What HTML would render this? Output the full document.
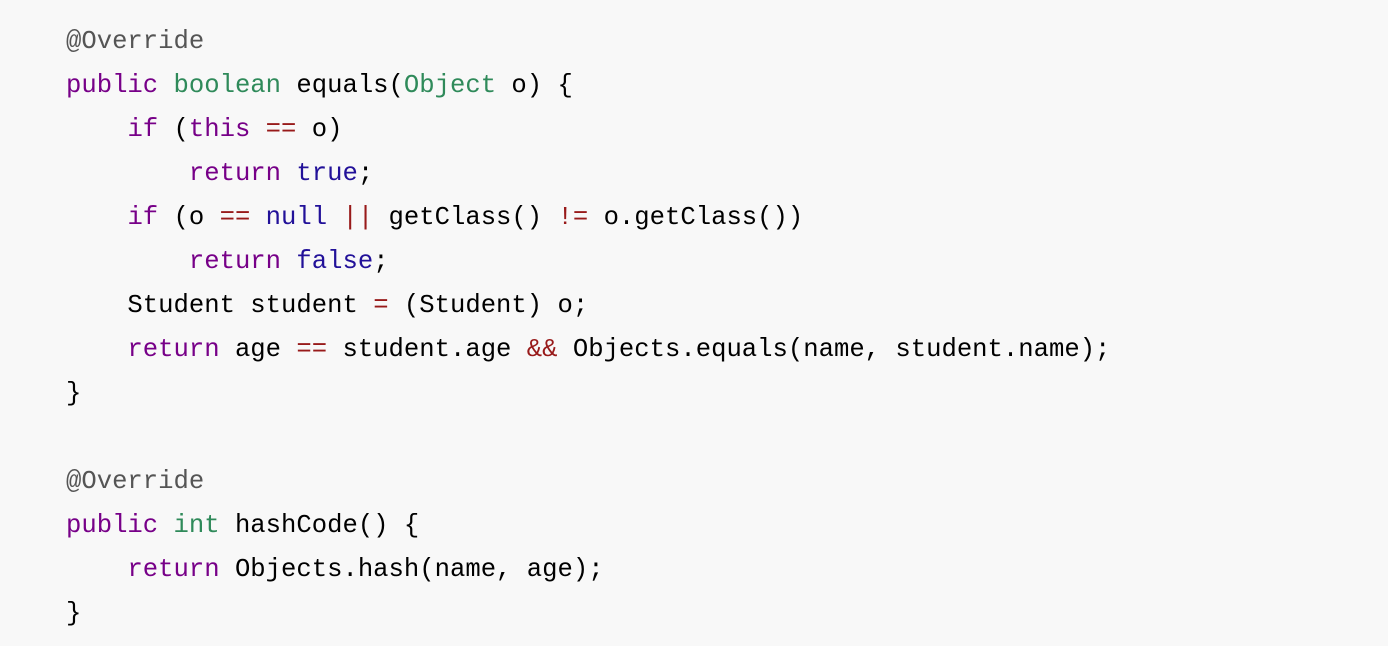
<!DOCTYPE html>
<html><head><meta charset="utf-8"><style>
html,body{margin:0;padding:0;background:#f8f8f8;width:1388px;height:646px;overflow:hidden}
pre{margin:0;padding:20px 0 0 66px;font-family:"Liberation Mono",monospace;font-size:25.6px;line-height:44px;color:#000}
.k{color:#770088}.t{color:#2f8a5a}.a{color:#221199}.o{color:#981a1a}.m{color:#555}
</style></head><body><pre><span class="m">@Override</span>
<span class="k">public</span> <span class="t">boolean</span> equals(<span class="t">Object</span> o) {
    <span class="k">if</span> (<span class="k">this</span> <span class="o">==</span> o)
        <span class="k">return</span> <span class="a">true</span>;
    <span class="k">if</span> (o <span class="o">==</span> <span class="a">null</span> <span class="o">||</span> getClass() <span class="o">!=</span> o.getClass())
        <span class="k">return</span> <span class="a">false</span>;
    Student student <span class="o">=</span> (Student) o;
    <span class="k">return</span> age <span class="o">==</span> student.age <span class="o">&amp;&amp;</span> Objects.equals(name, student.name);
}

<span class="m">@Override</span>
<span class="k">public</span> <span class="t">int</span> hashCode() {
    <span class="k">return</span> Objects.hash(name, age);
}</pre></body></html>
